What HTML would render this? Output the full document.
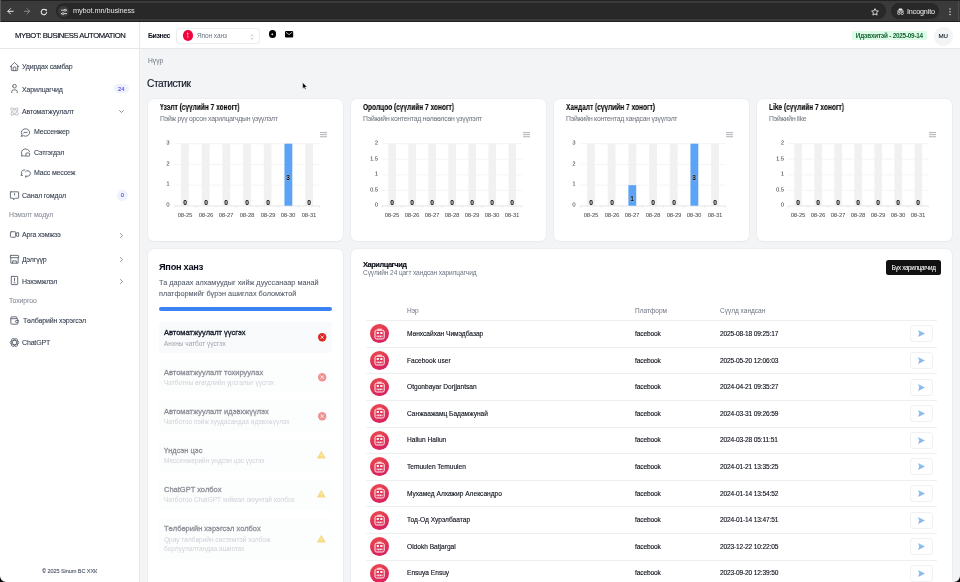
<!DOCTYPE html>
<html><head><meta charset="utf-8">
<style>
*{box-sizing:border-box;margin:0;padding:0}
html,body{width:960px;height:582px;overflow:hidden;background:#f3f4f6;font-family:"Liberation Sans",sans-serif;color:#111827}
.a{position:absolute;white-space:nowrap;line-height:1;will-change:transform}
svg{position:absolute;overflow:visible}
#chrome{position:absolute;left:0;top:0;width:960px;height:22px;background:#3a3a3a;border-top:1px solid #222;border-bottom:1px solid #1f1f1f}
#omni{position:absolute;left:56px;top:2.1px;width:830px;height:15.6px;border-radius:8px;background:#282828}
#incog{position:absolute;left:891px;top:2.1px;width:48px;height:15.6px;border-radius:8px;background:#282828}
#side{position:absolute;left:0;top:22px;width:140px;height:560px;background:#fff;border-right:1px solid #e5e7eb}
#logo{position:absolute;left:0;top:0;width:139px;height:26.5px;border-bottom:1px solid #e5e7eb}
#hdr{position:absolute;left:140px;top:22px;width:820px;height:26.5px;background:#fff;border-bottom:1px solid #e5e7eb}
.card{position:absolute;background:#fff;border-radius:6px;box-shadow:0 0 0 0.5px #e5e7eb,0 1px 2px rgba(0,0,0,.04)}
.si{font-size:7px;color:#374151;letter-spacing:-0.16px;-webkit-text-stroke:0.1px #374151}
.sic{stroke:#4b5563;fill:none;stroke-width:1.05;stroke-linecap:round;stroke-linejoin:round}
.sec{font-size:6.9px;color:#8d929b;letter-spacing:-0.1px;-webkit-text-stroke:0.1px #8d929b}
.chev{stroke:#6b7280;fill:none;stroke-width:0.8;stroke-linecap:round;stroke-linejoin:round}

.ct{font-size:8.2px;font-weight:700;color:#000;-webkit-text-stroke:0.1px #000;transform:scaleX(.8);transform-origin:0 0}
.cs{font-size:6.8px;color:#747983;letter-spacing:-0.23px;-webkit-text-stroke:0.06px #747983}
.yl{font-size:11.4px;color:#262a30;transform:scale(.5);transform-origin:0 0}
.xl{font-size:11.6px;color:#30343a;width:60px;text-align:center;letter-spacing:-0.1px;transform:scale(.5);transform-origin:0 0}
.dl{font-size:6.6px;font-weight:700;color:#000;-webkit-text-stroke:0.1px #000;width:20px;text-align:center;text-shadow:0 0 1px #fff,0 0 1px #fff}
.tt{font-size:7.5px;font-weight:400;color:#111827;-webkit-text-stroke:0.3px #111827}
.ts{font-size:6.5px;color:#9ca3af}
.th{font-size:6.5px;color:#6b7280}
.td{font-size:6.6px;color:#0b0f19;-webkit-text-stroke:0.12px #0b0f19}
</style></head><body>
<div id="chrome">
  <svg style="left:6.9px;top:6.9px" width="6.6" height="6.6" viewBox="0 0 7 7"><path d="M6.6 3.5H1M3.7.7L.9 3.5l2.8 2.8" stroke="#e8e8e8" stroke-width="1.05" fill="none" stroke-linecap="round" stroke-linejoin="round"/></svg>
  <svg style="left:23.7px;top:6.9px" width="6.6" height="6.6" viewBox="0 0 7 7"><path d="M.4 3.5H6M3.3.7l2.8 2.8-2.8 2.8" stroke="#8a8a8a" stroke-width="1.05" fill="none" stroke-linecap="round" stroke-linejoin="round"/></svg>
  <svg style="left:40px;top:6.5px" width="8" height="8" viewBox="0 0 8 8"><path d="M6.6 4.3A2.7 2.7 0 1 1 5.7 2" stroke="#e8e8e8" stroke-width="1.1" fill="none" stroke-linecap="round"/><path d="M4.6 1.2h2.3v2.3z" fill="#e8e8e8"/></svg>
  <div style="position:absolute;left:0;top:-1px;width:1px;height:22px;background:#5a5a5a"></div>
  <div id="omni">
    <div style="position:absolute;left:2.3px;top:2.8px;width:11px;height:11px;border-radius:50%;background:#3b3b3b"></div>
    <svg style="left:4.8px;top:5.5px" width="6" height="6" viewBox="0 0 6 6"><path d="M0 1.2h6M0 4.6h6" stroke="#e0e0e0" stroke-width="0.9"/><circle cx="4" cy="1.2" r="1" fill="#3b3b3b" stroke="#e0e0e0" stroke-width=".8"/><circle cx="2" cy="4.6" r="1" fill="#3b3b3b" stroke="#e0e0e0" stroke-width=".8"/></svg>
    <div class="a" style="left:17px;top:4.2px;font-size:7.4px;color:#e3e3e3;letter-spacing:-0.12px">mybot.mn/business</div>
  </div>
  <svg style="left:871px;top:6.5px" width="8" height="8" viewBox="0 0 8 8"><path d="M4 0.6l1 2.2 2.4.3-1.8 1.6.5 2.4L4 5.9 1.9 7.1l.5-2.4L.6 3.1 3 2.8z" stroke="#e8e8e8" stroke-width="0.9" fill="none" stroke-linejoin="round"/></svg>
  <div id="incog">
    <svg style="left:5.5px;top:4.5px" width="7" height="7" viewBox="0 0 7 7"><path d="M1.2 2.6L2 .4h3l.8 2.2z" fill="#e8e8e8"/><rect x="0" y="2.7" width="7" height=".8" fill="#e8e8e8"/><circle cx="1.8" cy="5.3" r="1.2" stroke="#e8e8e8" stroke-width=".8" fill="none"/><circle cx="5.2" cy="5.3" r="1.2" stroke="#e8e8e8" stroke-width=".8" fill="none"/></svg>
    <div class="a" style="left:16px;top:4.5px;font-size:7.2px;color:#e3e3e3;letter-spacing:-0.15px;-webkit-text-stroke:0.05px #e3e3e3">Incognito</div>
  </div>
  <svg style="left:948.6px;top:7.2px" width="2" height="8" viewBox="0 0 2 8"><circle cx="1" cy="1" r=".75" fill="#e0e0e0"/><circle cx="1" cy="3.85" r=".75" fill="#e0e0e0"/><circle cx="1" cy="6.6" r=".75" fill="#e0e0e0"/></svg>
  <div style="position:absolute;left:958px;top:0;width:1px;height:20px;background:#4d4d4d"></div>
</div>

<div id="side">
  <div id="logo"><div class="a" style="left:14.7px;top:10.4px;font-size:7.7px;color:#0b0f19;letter-spacing:-0.44px;-webkit-text-stroke:0.15px #0b0f19">MYBOT: BUSINESS AUTOMATION</div></div>
</div>
<div style="position:absolute;left:0;top:0">
  <!-- home -->
  <svg style="left:8.50px;top:60.70px" width="11" height="11" viewBox="0 0 24 24"><path d="M5 12H3l9-9 9 9h-2M5 12v7a2 2 0 0 0 2 2h10a2 2 0 0 0 2-2v-7M9 21v-6a2 2 0 0 1 2-2h2a2 2 0 0 1 2 2v6" fill="none" stroke="#5b6270" stroke-width="2.0" stroke-linecap="round" stroke-linejoin="round"/></svg>
  <div class="a si" style="left:22px;top:63.45px">Удирдах самбар</div>
  <!-- user -->
  <svg style="left:8.60px;top:83.30px" width="11" height="11" viewBox="0 0 24 24"><path d="M8 7a4 4 0 1 0 8 0a4 4 0 0 0-8 0M6 21v-2a4 4 0 0 1 4-4h4a4 4 0 0 1 4 4v2" fill="none" stroke="#5b6270" stroke-width="2.0" stroke-linecap="round" stroke-linejoin="round"/></svg>
  <div class="a si" style="left:22px;top:86.15px">Харилцагчид</div>
  <div class="a" style="left:113.8px;top:84.2px;width:14.6px;height:9.2px;border-radius:4.6px;background:#eef2ff;color:#4f46e5;font-size:5.8px;line-height:10px;text-align:center;-webkit-text-stroke:0.1px #4f46e5">24</div>
  <!-- automation (atom) -->
  <svg style="left:8.50px;top:105.80px" width="11" height="11" viewBox="0 0 24 24"><path d="M12 12v.01M19.07 4.93c-1.56-1.56-6 .34-9.9 4.24-3.9 3.9-5.8 8.34-4.24 9.9 1.56 1.56 6-.34 9.9-4.24 3.9-3.9 5.8-8.34 4.24-9.9M4.93 4.93c-1.56 1.56.34 6 4.24 9.9 3.9 3.9 8.34 5.8 9.9 4.24 1.56-1.56-.34-6-4.24-9.9-3.9-3.9-8.34-5.8-9.9-4.24" fill="none" stroke="#c6cad1" stroke-width="2.4" stroke-linecap="round" stroke-linejoin="round"/></svg>
  <div class="a si" style="left:22px;top:108.35px">Автоматжуулалт</div>
  <svg style="left:119px;top:109.5px" width="5" height="3" viewBox="0 0 5 3"><path class="chev" d="M.5.5L2.5 2.5 4.5.5"/></svg>
  <!-- messenger -->
  <svg style="left:19.60px;top:126.70px" width="11" height="11" viewBox="0 0 24 24"><path d="M3 20l1.3-3.9A9 8 0 1 1 7.7 19L3 20M8 13l3-2 2 2 3-2" fill="none" stroke="#5b6270" stroke-width="2.0" stroke-linecap="round" stroke-linejoin="round"/></svg>
  <div class="a si" style="left:33.7px;top:128.25px">Мессенжер</div>
  <!-- comment -->
  <svg style="left:19.60px;top:147.10px" width="11" height="11" viewBox="0 0 24 24"><path d="M12.5 19.6A9 8 0 0 1 7.7 19L3 20l1.3-3.9A9 8 0 1 1 20.8 10" fill="none" stroke="#5b6270" stroke-width="2.0" stroke-linecap="round" stroke-linejoin="round"/><rect x="13" y="13" width="8" height="7" rx="2" fill="none" stroke="#5b6270" stroke-width="2.0"/></svg>
  <div class="a si" style="left:33.7px;top:149.35px">Сэтгэгдэл</div>
  <!-- mass message -->
  <svg style="left:19.60px;top:167.50px" width="11" height="11" viewBox="0 0 24 24"><path d="M12 8a6 6 0 1 1 4.6 9.8L12 20l.8-3.3M10.6 4.2A6.4 6 0 0 0 3 10l1 3-2 3h3.4" fill="none" stroke="#5b6270" stroke-width="2.0" stroke-linecap="round" stroke-linejoin="round"/></svg>
  <div class="a si" style="left:33.7px;top:169.05px">Масс мессеж</div>
  <!-- feedback -->
  <svg style="left:8.60px;top:189.50px" width="11" height="11" viewBox="0 0 24 24"><path d="M4 4h16a1 1 0 0 1 1 1v12a1 1 0 0 1-1 1h-6l-4 3v-3H4a1 1 0 0 1-1-1V5a1 1 0 0 1 1-1zM12 8v3" fill="none" stroke="#5b6270" stroke-width="2.0" stroke-linecap="round" stroke-linejoin="round"/></svg>
  <div class="a si" style="left:22px;top:191.95px">Санал гомдол</div>
  <div class="a" style="left:117.3px;top:189.5px;width:10.8px;height:10.8px;border-radius:50%;background:#eef2ff;color:#4f46e5;font-size:5.8px;line-height:11.6px;text-align:center;-webkit-text-stroke:0.1px #4f46e5">0</div>
  <div class="a sec" style="left:9.4px;top:211.85px">Нэмэлт модул</div>
  <!-- event video -->
  <svg style="left:8.60px;top:229.10px" width="11" height="11" viewBox="0 0 24 24"><path d="M15 10l4.55-2.28A1 1 0 0 1 21 8.62v6.76a1 1 0 0 1-1.45.9L15 14v-4zM5 6h8a2 2 0 0 1 2 2v8a2 2 0 0 1-2 2H5a2 2 0 0 1-2-2V8a2 2 0 0 1 2-2z" fill="none" stroke="#5b6270" stroke-width="2.0" stroke-linecap="round" stroke-linejoin="round"/></svg>
  <div class="a si" style="left:22.3px;top:231.05px">Арга хэмжээ</div>
  <svg style="left:120.3px;top:232.6px" width="3" height="5" viewBox="0 0 3 5"><path class="chev" d="M.5.5l2 2-2 2"/></svg>
  <!-- store -->
  <svg style="left:8.60px;top:253.50px" width="11" height="11" viewBox="0 0 24 24"><path d="M4 3h16a1 1 0 0 1 1 1v4H3V4a1 1 0 0 1 1-1zM4 8v12h16V8M8 20v-5h8v5" fill="none" stroke="#5b6270" stroke-width="2.0" stroke-linecap="round" stroke-linejoin="round"/></svg>
  <div class="a si" style="left:22.3px;top:255.85px">Дэлгүүр</div>
  <svg style="left:120.3px;top:256.8px" width="3" height="5" viewBox="0 0 3 5"><path class="chev" d="M.5.5l2 2-2 2"/></svg>
  <!-- invoice -->
  <svg style="left:8.90px;top:275.20px" width="11" height="11" viewBox="0 0 24 24"><path d="M6 3h12a1 1 0 0 1 1 1v16a1 1 0 0 1-1 1H6a1 1 0 0 1-1-1V4a1 1 0 0 1 1-1zM12 7v6M11 17h2" fill="none" stroke="#5b6270" stroke-width="2.0" stroke-linecap="round" stroke-linejoin="round"/></svg>
  <div class="a si" style="left:22.3px;top:277.65px">Нэхэмжлэл</div>
  <svg style="left:120.3px;top:278.6px" width="3" height="5" viewBox="0 0 3 5"><path class="chev" d="M.5.5l2 2-2 2"/></svg>
  <div class="a sec" style="left:9.4px;top:298.35px">Тохиргоо</div>
  <!-- wallet -->
  <svg style="left:8.80px;top:315.00px" width="11" height="11" viewBox="0 0 24 24"><path d="M17 8V5a1 1 0 0 0-1-1H6a2 2 0 0 0-2 2v12a2 2 0 0 0 2 2h12a1 1 0 0 0 1-1v-3M20 12v4h-4a2 2 0 0 1 0-4h4M19 12V9a1 1 0 0 0-1-1H4" fill="none" stroke="#5b6270" stroke-width="2.0" stroke-linecap="round" stroke-linejoin="round"/></svg>
  <div class="a si" style="left:22.5px;top:317.45px">Төлбөрийн хэрэгсэл</div>
  <!-- chatgpt -->
  <svg style="left:8.60px;top:336.90px" width="11" height="11" viewBox="0 0 24 24"><g fill="none" stroke="#5b6270" stroke-width="1.9"><ellipse cx="12" cy="12" rx="9.5" ry="4.6"/><ellipse cx="12" cy="12" rx="9.5" ry="4.6" transform="rotate(60 12 12)"/><ellipse cx="12" cy="12" rx="9.5" ry="4.6" transform="rotate(120 12 12)"/></g></svg>
  <div class="a si" style="left:22.3px;top:339.35px">ChatGPT</div>
  <div class="a" style="left:42.4px;top:569.4px;font-size:5.6px;color:#4b5563;letter-spacing:-0.1px;-webkit-text-stroke:0.1px #4b5563">© 2025 Sinum BC ХХК</div>
</div>

<div id="hdr">
  <div class="a" style="left:7.5px;top:10.1px;font-size:7px;font-weight:700;color:#0b0f19;letter-spacing:-0.45px">Бизнес</div>
  <div style="position:absolute;left:36.3px;top:5.6px;width:83.8px;height:16px;border:1px solid #eceef1;border-radius:3px;background:#fff">
    <div style="position:absolute;left:5.3px;top:1.5px;width:10.6px;height:10.8px;border-radius:50%;background:#f2063c"></div>
    <svg style="left:9px;top:3.6px" width="3" height="6" viewBox="0 0 3 6"><path d="M1 .4l1.4.5-.3 1.9H1z" fill="#f7b9c6"/><path d="M1.2 3.4h1.1v2.4H1.2z" fill="#f4a9b9"/></svg>
    <div class="a" style="left:19.8px;top:4.8px;font-size:6.5px;color:#6b7280;letter-spacing:-0.07px">Япон ханз</div>
    <svg style="left:72.5px;top:5px" width="4" height="6" viewBox="0 0 4 6"><path d="M.6 2L2 .8 3.4 2M.6 4L2 5.2 3.4 4" stroke="#a3a8b0" stroke-width=".7" fill="none"/></svg>
  </div>
  <div style="position:absolute;left:128.6px;top:8px;width:7.7px;height:7.7px;border-radius:50%;background:#000"></div>
  <svg style="left:131.2px;top:10.6px" width="2.6" height="2.6" viewBox="0 0 2.6 2.6"><path d="M1.3 .3v2M.3 1.3h2" stroke="#fff" stroke-width=".7"/></svg>
  <svg style="left:145px;top:8.6px" width="8.2" height="6.4" viewBox="0 0 8.2 6.4"><rect x="0" y="0" width="8.2" height="6.4" rx=".9" fill="#000"/><path d="M.9 1.2L4.1 3.6 7.3 1.2" stroke="#fff" stroke-width=".7" fill="none"/></svg>
  <div class="a" style="left:712px;top:8.8px;width:74.8px;height:9.2px;border-radius:2px;background:#dcfce7;color:#166534;font-size:6.3px;font-weight:700;line-height:9.2px;text-align:center;letter-spacing:-0.2px">Идэвхитэй - 2025-09-14</div>
  <div class="a" style="left:794px;top:4.5px;width:18.5px;height:18.5px;border-radius:50%;background:#f3f4f6;color:#111827;font-size:6.2px;line-height:18.5px;text-align:center;-webkit-text-stroke:0.12px #111827">MU</div>
</div>

<div class="a" style="left:147.6px;top:58.3px;font-size:6.7px;color:#6b7280">Нүүр</div>
<div class="a" style="left:147.4px;top:78.9px;font-size:10.2px;color:#111827;letter-spacing:-0.45px;-webkit-text-stroke:0.15px #111827">Статистик</div>


<div class="card" style="left:148px;top:98.5px;width:195px;height:142.5px">
<div class="a ct" style="left:11.5px;top:5.1px">Үзэлт (сүүлийн 7 хоногт)</div>
<div class="a cs" style="left:11.6px;top:17.8px">Пэйж рүү орсон харилцагчдын үзүүлэлт</div>
<svg style="left:172px;top:33.6px" width="7" height="6" viewBox="0 0 7 6"><path d="M0 .6h7M0 2.65h7M0 4.75h7" stroke="#9ea3ab" stroke-width=".85"/></svg>
<svg style="left:0;top:0" width="195" height="142" viewBox="0 0 195 142"><path d="M26.6 44.7h144.8" stroke="#ececec" stroke-width=".6"/><path d="M26.6 65.43h144.8" stroke="#ececec" stroke-width=".6"/><path d="M26.6 86.17h144.8" stroke="#ececec" stroke-width=".6"/><path d="M26.6 106.9h144.8" stroke="#ececec" stroke-width=".6"/><rect x="33.04" y="44.7" width="7.8" height="62.2" fill="#f1f1f1"/><rect x="53.73" y="44.7" width="7.8" height="62.2" fill="#f1f1f1"/><rect x="74.41" y="44.7" width="7.8" height="62.2" fill="#f1f1f1"/><rect x="95.1" y="44.7" width="7.8" height="62.2" fill="#f1f1f1"/><rect x="115.79" y="44.7" width="7.8" height="62.2" fill="#f1f1f1"/><rect x="136.47" y="44.7" width="7.8" height="62.2" fill="#f1f1f1"/><rect x="136.47" y="44.7" width="7.8" height="62.2" fill="#5aa3f6"/><rect x="157.16" y="44.7" width="7.8" height="62.2" fill="#f1f1f1"/><path d="M26.6 107.1h144.8" stroke="#e3e3e3" stroke-width=".6"/><path d="M26.6 106.9v2.2" stroke="#e3e3e3" stroke-width=".6"/><path d="M47.29 106.9v2.2" stroke="#e3e3e3" stroke-width=".6"/><path d="M67.97 106.9v2.2" stroke="#e3e3e3" stroke-width=".6"/><path d="M88.66 106.9v2.2" stroke="#e3e3e3" stroke-width=".6"/><path d="M109.34 106.9v2.2" stroke="#e3e3e3" stroke-width=".6"/><path d="M130.03 106.9v2.2" stroke="#e3e3e3" stroke-width=".6"/><path d="M150.71 106.9v2.2" stroke="#e3e3e3" stroke-width=".6"/><path d="M171.4 106.9v2.2" stroke="#e3e3e3" stroke-width=".6"/></svg>
<div class="a yl" style="left:0.4px;width:80px;text-align:center;top:41.5px">3</div>
<div class="a yl" style="left:0.4px;width:80px;text-align:center;top:62.23px">2</div>
<div class="a yl" style="left:0.4px;width:80px;text-align:center;top:82.97px">1</div>
<div class="a yl" style="left:0.4px;width:80px;text-align:center;top:103.7px">0</div>
<div class="a dl" style="left:26.94px;top:101.8px">0</div>
<div class="a xl" style="left:21.94px;top:113.8px">08-25</div>
<div class="a dl" style="left:47.63px;top:101.8px">0</div>
<div class="a xl" style="left:42.63px;top:113.8px">08-26</div>
<div class="a dl" style="left:68.31px;top:101.8px">0</div>
<div class="a xl" style="left:63.31px;top:113.8px">08-27</div>
<div class="a dl" style="left:89px;top:101.8px">0</div>
<div class="a xl" style="left:84px;top:113.8px">08-28</div>
<div class="a dl" style="left:109.69px;top:101.8px">0</div>
<div class="a xl" style="left:104.69px;top:113.8px">08-29</div>
<div class="a dl" style="left:130.37px;top:76.9px">3</div>
<div class="a xl" style="left:125.37px;top:113.8px">08-30</div>
<div class="a dl" style="left:151.06px;top:101.8px">0</div>
<div class="a xl" style="left:146.06px;top:113.8px">08-31</div>
</div>
<div class="card" style="left:351px;top:98.5px;width:195px;height:142.5px">
<div class="a ct" style="left:11.5px;top:5.1px">Оролцоо (сүүлийн 7 хоногт)</div>
<div class="a cs" style="left:11.6px;top:17.8px">Пэйжийн контентад нөлөөлсөн үзүүлэлт</div>
<svg style="left:172px;top:33.6px" width="7" height="6" viewBox="0 0 7 6"><path d="M0 .6h7M0 2.65h7M0 4.75h7" stroke="#9ea3ab" stroke-width=".85"/></svg>
<svg style="left:0;top:0" width="195" height="142" viewBox="0 0 195 142"><path d="M31.1 44.7h140.2" stroke="#ececec" stroke-width=".6"/><path d="M31.1 60.25h140.2" stroke="#ececec" stroke-width=".6"/><path d="M31.1 75.8h140.2" stroke="#ececec" stroke-width=".6"/><path d="M31.1 91.35h140.2" stroke="#ececec" stroke-width=".6"/><path d="M31.1 106.9h140.2" stroke="#ececec" stroke-width=".6"/><rect x="37.31" y="44.7" width="7.6" height="62.2" fill="#f1f1f1"/><rect x="57.34" y="44.7" width="7.6" height="62.2" fill="#f1f1f1"/><rect x="77.37" y="44.7" width="7.6" height="62.2" fill="#f1f1f1"/><rect x="97.4" y="44.7" width="7.6" height="62.2" fill="#f1f1f1"/><rect x="117.43" y="44.7" width="7.6" height="62.2" fill="#f1f1f1"/><rect x="137.46" y="44.7" width="7.6" height="62.2" fill="#f1f1f1"/><rect x="157.49" y="44.7" width="7.6" height="62.2" fill="#f1f1f1"/><path d="M31.1 107.1h140.2" stroke="#e3e3e3" stroke-width=".6"/><path d="M31.1 106.9v2.2" stroke="#e3e3e3" stroke-width=".6"/><path d="M51.13 106.9v2.2" stroke="#e3e3e3" stroke-width=".6"/><path d="M71.16 106.9v2.2" stroke="#e3e3e3" stroke-width=".6"/><path d="M91.19 106.9v2.2" stroke="#e3e3e3" stroke-width=".6"/><path d="M111.21 106.9v2.2" stroke="#e3e3e3" stroke-width=".6"/><path d="M131.24 106.9v2.2" stroke="#e3e3e3" stroke-width=".6"/><path d="M151.27 106.9v2.2" stroke="#e3e3e3" stroke-width=".6"/><path d="M171.3 106.9v2.2" stroke="#e3e3e3" stroke-width=".6"/></svg>
<div class="a yl" style="left:-13.3px;width:80px;text-align:right;top:41.5px">2</div>
<div class="a yl" style="left:-13.3px;width:80px;text-align:right;top:57.05px">1.5</div>
<div class="a yl" style="left:-13.3px;width:80px;text-align:right;top:72.6px">1</div>
<div class="a yl" style="left:-13.3px;width:80px;text-align:right;top:88.15px">0.5</div>
<div class="a yl" style="left:-13.3px;width:80px;text-align:right;top:103.7px">0</div>
<div class="a dl" style="left:31.11px;top:101.8px">0</div>
<div class="a xl" style="left:26.11px;top:113.8px">08-25</div>
<div class="a dl" style="left:51.14px;top:101.8px">0</div>
<div class="a xl" style="left:46.14px;top:113.8px">08-26</div>
<div class="a dl" style="left:71.17px;top:101.8px">0</div>
<div class="a xl" style="left:66.17px;top:113.8px">08-27</div>
<div class="a dl" style="left:91.2px;top:101.8px">0</div>
<div class="a xl" style="left:86.2px;top:113.8px">08-28</div>
<div class="a dl" style="left:111.23px;top:101.8px">0</div>
<div class="a xl" style="left:106.23px;top:113.8px">08-29</div>
<div class="a dl" style="left:131.26px;top:101.8px">0</div>
<div class="a xl" style="left:126.26px;top:113.8px">08-30</div>
<div class="a dl" style="left:151.29px;top:101.8px">0</div>
<div class="a xl" style="left:146.29px;top:113.8px">08-31</div>
</div>
<div class="card" style="left:554px;top:98.5px;width:195px;height:142.5px">
<div class="a ct" style="left:11.5px;top:5.1px">Хандалт (сүүлийн 7 хоногт)</div>
<div class="a cs" style="left:11.6px;top:17.8px">Пэйжийн контентад хандсан үзүүлэлт</div>
<svg style="left:172px;top:33.6px" width="7" height="6" viewBox="0 0 7 6"><path d="M0 .6h7M0 2.65h7M0 4.75h7" stroke="#9ea3ab" stroke-width=".85"/></svg>
<svg style="left:0;top:0" width="195" height="142" viewBox="0 0 195 142"><path d="M26.6 44.7h144.8" stroke="#ececec" stroke-width=".6"/><path d="M26.6 65.43h144.8" stroke="#ececec" stroke-width=".6"/><path d="M26.6 86.17h144.8" stroke="#ececec" stroke-width=".6"/><path d="M26.6 106.9h144.8" stroke="#ececec" stroke-width=".6"/><rect x="33.04" y="44.7" width="7.8" height="62.2" fill="#f1f1f1"/><rect x="53.73" y="44.7" width="7.8" height="62.2" fill="#f1f1f1"/><rect x="74.41" y="44.7" width="7.8" height="62.2" fill="#f1f1f1"/><rect x="74.41" y="86.17" width="7.8" height="20.73" fill="#5aa3f6"/><rect x="95.1" y="44.7" width="7.8" height="62.2" fill="#f1f1f1"/><rect x="115.79" y="44.7" width="7.8" height="62.2" fill="#f1f1f1"/><rect x="136.47" y="44.7" width="7.8" height="62.2" fill="#f1f1f1"/><rect x="136.47" y="44.7" width="7.8" height="62.2" fill="#5aa3f6"/><rect x="157.16" y="44.7" width="7.8" height="62.2" fill="#f1f1f1"/><path d="M26.6 107.1h144.8" stroke="#e3e3e3" stroke-width=".6"/><path d="M26.6 106.9v2.2" stroke="#e3e3e3" stroke-width=".6"/><path d="M47.29 106.9v2.2" stroke="#e3e3e3" stroke-width=".6"/><path d="M67.97 106.9v2.2" stroke="#e3e3e3" stroke-width=".6"/><path d="M88.66 106.9v2.2" stroke="#e3e3e3" stroke-width=".6"/><path d="M109.34 106.9v2.2" stroke="#e3e3e3" stroke-width=".6"/><path d="M130.03 106.9v2.2" stroke="#e3e3e3" stroke-width=".6"/><path d="M150.71 106.9v2.2" stroke="#e3e3e3" stroke-width=".6"/><path d="M171.4 106.9v2.2" stroke="#e3e3e3" stroke-width=".6"/></svg>
<div class="a yl" style="left:0.4px;width:80px;text-align:center;top:41.5px">3</div>
<div class="a yl" style="left:0.4px;width:80px;text-align:center;top:62.23px">2</div>
<div class="a yl" style="left:0.4px;width:80px;text-align:center;top:82.97px">1</div>
<div class="a yl" style="left:0.4px;width:80px;text-align:center;top:103.7px">0</div>
<div class="a dl" style="left:26.94px;top:101.8px">0</div>
<div class="a xl" style="left:21.94px;top:113.8px">08-25</div>
<div class="a dl" style="left:47.63px;top:101.8px">0</div>
<div class="a xl" style="left:42.63px;top:113.8px">08-26</div>
<div class="a dl" style="left:68.31px;top:97.63px">1</div>
<div class="a xl" style="left:63.31px;top:113.8px">08-27</div>
<div class="a dl" style="left:89px;top:101.8px">0</div>
<div class="a xl" style="left:84px;top:113.8px">08-28</div>
<div class="a dl" style="left:109.69px;top:101.8px">0</div>
<div class="a xl" style="left:104.69px;top:113.8px">08-29</div>
<div class="a dl" style="left:130.37px;top:76.9px">3</div>
<div class="a xl" style="left:125.37px;top:113.8px">08-30</div>
<div class="a dl" style="left:151.06px;top:101.8px">0</div>
<div class="a xl" style="left:146.06px;top:113.8px">08-31</div>
</div>
<div class="card" style="left:757px;top:98.5px;width:195px;height:142.5px">
<div class="a ct" style="left:11.5px;top:5.1px">Like (сүүлийн 7 хоногт)</div>
<div class="a cs" style="left:11.6px;top:17.8px">Пэйжийн like</div>
<svg style="left:172px;top:33.6px" width="7" height="6" viewBox="0 0 7 6"><path d="M0 .6h7M0 2.65h7M0 4.75h7" stroke="#9ea3ab" stroke-width=".85"/></svg>
<svg style="left:0;top:0" width="195" height="142" viewBox="0 0 195 142"><path d="M31.1 44.7h140.2" stroke="#ececec" stroke-width=".6"/><path d="M31.1 60.25h140.2" stroke="#ececec" stroke-width=".6"/><path d="M31.1 75.8h140.2" stroke="#ececec" stroke-width=".6"/><path d="M31.1 91.35h140.2" stroke="#ececec" stroke-width=".6"/><path d="M31.1 106.9h140.2" stroke="#ececec" stroke-width=".6"/><rect x="37.31" y="44.7" width="7.6" height="62.2" fill="#f1f1f1"/><rect x="57.34" y="44.7" width="7.6" height="62.2" fill="#f1f1f1"/><rect x="77.37" y="44.7" width="7.6" height="62.2" fill="#f1f1f1"/><rect x="97.4" y="44.7" width="7.6" height="62.2" fill="#f1f1f1"/><rect x="117.43" y="44.7" width="7.6" height="62.2" fill="#f1f1f1"/><rect x="137.46" y="44.7" width="7.6" height="62.2" fill="#f1f1f1"/><rect x="157.49" y="44.7" width="7.6" height="62.2" fill="#f1f1f1"/><path d="M31.1 107.1h140.2" stroke="#e3e3e3" stroke-width=".6"/><path d="M31.1 106.9v2.2" stroke="#e3e3e3" stroke-width=".6"/><path d="M51.13 106.9v2.2" stroke="#e3e3e3" stroke-width=".6"/><path d="M71.16 106.9v2.2" stroke="#e3e3e3" stroke-width=".6"/><path d="M91.19 106.9v2.2" stroke="#e3e3e3" stroke-width=".6"/><path d="M111.21 106.9v2.2" stroke="#e3e3e3" stroke-width=".6"/><path d="M131.24 106.9v2.2" stroke="#e3e3e3" stroke-width=".6"/><path d="M151.27 106.9v2.2" stroke="#e3e3e3" stroke-width=".6"/><path d="M171.3 106.9v2.2" stroke="#e3e3e3" stroke-width=".6"/></svg>
<div class="a yl" style="left:-13.3px;width:80px;text-align:right;top:41.5px">2</div>
<div class="a yl" style="left:-13.3px;width:80px;text-align:right;top:57.05px">1.5</div>
<div class="a yl" style="left:-13.3px;width:80px;text-align:right;top:72.6px">1</div>
<div class="a yl" style="left:-13.3px;width:80px;text-align:right;top:88.15px">0.5</div>
<div class="a yl" style="left:-13.3px;width:80px;text-align:right;top:103.7px">0</div>
<div class="a dl" style="left:31.11px;top:101.8px">0</div>
<div class="a xl" style="left:26.11px;top:113.8px">08-25</div>
<div class="a dl" style="left:51.14px;top:101.8px">0</div>
<div class="a xl" style="left:46.14px;top:113.8px">08-26</div>
<div class="a dl" style="left:71.17px;top:101.8px">0</div>
<div class="a xl" style="left:66.17px;top:113.8px">08-27</div>
<div class="a dl" style="left:91.2px;top:101.8px">0</div>
<div class="a xl" style="left:86.2px;top:113.8px">08-28</div>
<div class="a dl" style="left:111.23px;top:101.8px">0</div>
<div class="a xl" style="left:106.23px;top:113.8px">08-29</div>
<div class="a dl" style="left:131.26px;top:101.8px">0</div>
<div class="a xl" style="left:126.26px;top:113.8px">08-30</div>
<div class="a dl" style="left:151.29px;top:101.8px">0</div>
<div class="a xl" style="left:146.29px;top:113.8px">08-31</div>
</div>
<div class="card" style="left:148px;top:248.7px;width:195px;height:400px">
<div class="a" style="left:10.8px;top:14.1px;font-size:9.2px;font-weight:700;letter-spacing:-0.25px;color:#0b0f19;-webkit-text-stroke:0.05px #0b0f19">Япон ханз</div>
<div class="a" style="left:10.9px;top:29.5px;font-size:7.3px;line-height:10.6px;color:#555c69;-webkit-text-stroke:0.08px #555c69;white-space:normal;width:180px">Та дараах алхамуудыг хийж дууссанаар манай<br>платформийг бүрэн ашиглах боломжтой</div>
<div style="position:absolute;left:10.8px;top:58.3px;width:173.5px;height:3.8px;border-radius:2px;background:#3b82f6"></div>
<div style="position:absolute;left:11px;top:73.5px;width:172.8px;height:31px;border-radius:3.5px;background:#f9fafb;opacity:1.0">
<div class="a tt" style="left:5.4px;top:7.1px">Автоматжуулалт үүсгэх</div>
<div class="a ts" style="left:5.4px;top:16.4px;line-height:9.4px">Анхны чатбот үүсгэх</div>
<svg style="left:158.5px;top:11.3px" width="8.4" height="8.4" viewBox="0 0 8.4 8.4"><circle cx="4.2" cy="4.2" r="4.2" fill="#dc2626"/><path d="M2.9 2.9l2.6 2.6M5.5 2.9L2.9 5.5" stroke="#fff" stroke-width=".8" stroke-linecap="round"/></svg>
</div>
<div style="position:absolute;left:11px;top:112.8px;width:172.8px;height:31px;border-radius:3.5px;background:#f9fafb;opacity:0.5">
<div class="a tt" style="left:5.4px;top:7.1px">Автоматжуулалт тохируулах</div>
<div class="a ts" style="left:5.4px;top:16.4px;line-height:9.4px">Чатботны өгөгдлийн урсгалыг үүсгэх</div>
<svg style="left:158.5px;top:11.3px" width="8.4" height="8.4" viewBox="0 0 8.4 8.4"><circle cx="4.2" cy="4.2" r="4.2" fill="#dc2626"/><path d="M2.9 2.9l2.6 2.6M5.5 2.9L2.9 5.5" stroke="#fff" stroke-width=".8" stroke-linecap="round"/></svg>
</div>
<div style="position:absolute;left:11px;top:151.8px;width:172.8px;height:31px;border-radius:3.5px;background:#f9fafb;opacity:0.5">
<div class="a tt" style="left:5.4px;top:7.1px">Автоматжуулалт идэвхжүүлэх</div>
<div class="a ts" style="left:5.4px;top:16.4px;line-height:9.4px">Чатботоо пэйж хуудасандаа идэвхжүүлэх</div>
<svg style="left:158.5px;top:11.3px" width="8.4" height="8.4" viewBox="0 0 8.4 8.4"><circle cx="4.2" cy="4.2" r="4.2" fill="#dc2626"/><path d="M2.9 2.9l2.6 2.6M5.5 2.9L2.9 5.5" stroke="#fff" stroke-width=".8" stroke-linecap="round"/></svg>
</div>
<div style="position:absolute;left:11px;top:191.1px;width:172.8px;height:31px;border-radius:3.5px;background:#f9fafb;opacity:0.5">
<div class="a tt" style="left:5.4px;top:7.1px">Үндсэн цэс</div>
<div class="a ts" style="left:5.4px;top:16.4px;line-height:9.4px">Мессенжерийн үндсэн цэс үүсгэх</div>
<svg style="left:158.2px;top:11.3px" width="8.6" height="7.6" viewBox="0 0 8.6 7.6"><path d="M4.3.3L8.4 7.3H.2z" fill="#eab308" stroke="#eab308" stroke-width=".5" stroke-linejoin="round"/><path d="M4.3 2.8v2" stroke="#fff" stroke-width=".8"/><circle cx="4.3" cy="6" r=".45" fill="#fff"/></svg>
</div>
<div style="position:absolute;left:11px;top:230.4px;width:172.8px;height:31px;border-radius:3.5px;background:#f9fafb;opacity:0.5">
<div class="a tt" style="left:5.4px;top:7.1px">ChatGPT холбох</div>
<div class="a ts" style="left:5.4px;top:16.4px;line-height:9.4px">Чатботоо ChatGPT хиймэл оюунтай холбох</div>
<svg style="left:158.2px;top:11.3px" width="8.6" height="7.6" viewBox="0 0 8.6 7.6"><path d="M4.3.3L8.4 7.3H.2z" fill="#eab308" stroke="#eab308" stroke-width=".5" stroke-linejoin="round"/><path d="M4.3 2.8v2" stroke="#fff" stroke-width=".8"/><circle cx="4.3" cy="6" r=".45" fill="#fff"/></svg>
</div>
<div style="position:absolute;left:11px;top:269.7px;width:172.8px;height:40.8px;border-radius:3.5px;background:#f9fafb;opacity:0.5">
<div class="a tt" style="left:5.4px;top:7.1px">Төлбөрийн хэрэгсэл холбох</div>
<div class="a ts" style="left:5.4px;top:16.4px;line-height:9.4px">Qpay төлбөрийн системтэй холбож<br>борлуулалтандаа ашиглах</div>
<svg style="left:158.2px;top:16.2px" width="8.6" height="7.6" viewBox="0 0 8.6 7.6"><path d="M4.3.3L8.4 7.3H.2z" fill="#eab308" stroke="#eab308" stroke-width=".5" stroke-linejoin="round"/><path d="M4.3 2.8v2" stroke="#fff" stroke-width=".8"/><circle cx="4.3" cy="6" r=".45" fill="#fff"/></svg>
</div>
</div>
<div class="card" style="left:351px;top:248.7px;width:601px;height:400px">
<div class="a" style="left:11.5px;top:11.9px;font-size:7.4px;font-weight:700;letter-spacing:-0.42px;color:#0b0f19;-webkit-text-stroke:0.15px #0b0f19">Харилцагчид</div>
<div class="a" style="left:11.5px;top:21.1px;font-size:6.6px;letter-spacing:-0.12px;color:#6b7280">Сүүлийн 24 цагт хандсан харилцагчид</div>
<div class="a" style="left:535px;top:11.8px;width:55px;height:14.8px;border-radius:2.5px;background:#111;color:#fff;font-size:6.3px;line-height:15.6px;text-align:center;letter-spacing:-0.35px;-webkit-text-stroke:0.05px #fff;overflow:hidden">Бүх харилцагчид</div>
<div class="a th" style="left:56.1px;top:59.5px">Нэр</div>
<div class="a th" style="left:283.7px;top:59.5px">Платформ</div>
<div class="a th" style="left:369.3px;top:59.5px">Сүүлд хандсан</div>
<div style="position:absolute;left:14.8px;top:71.4px;width:571.2px;height:1px;background:#eeeff1"></div>
<div style="position:absolute;left:18.8px;top:75.7px;width:18.8px;height:18.8px;border-radius:50%;background:linear-gradient(160deg,#ea4b4b,#d81b60)"></div>
<svg style="left:22.6px;top:78.9px" width="11.2" height="12" viewBox="0 0 11.2 12"><g fill="none" stroke="#fff" stroke-width=".95"><rect x="1" y="2.2" width="9.2" height="8.8" rx="1.6"/><path d="M3.4 1.2h4.4"/></g><g fill="#fff"><rect x="2.7" y="4" width="2.2" height="1.9" rx=".3"/><rect x="6.3" y="4" width="2.2" height="1.9" rx=".3"/><path d="M2.6 7.6h6v1.6h-6z" opacity=".9"/></g><path d="M3.6 7.6v1.6M5.6 7.6v1.6M7.6 7.6v1.6" stroke="#e03658" stroke-width=".45"/></svg>
<div class="a td tn" style="left:56.1px;top:82.2px">Мөнхсайхан Чимэдбазар</div>
<div class="a td" style="left:283.7px;top:82.2px;letter-spacing:-0.12px">facebook</div>
<div class="a td" style="left:369.3px;top:82.2px;letter-spacing:-0.16px">2025-08-18 09:25:17</div>
<div style="position:absolute;left:559.2px;top:76.6px;width:23.1px;height:17px;border:0.8px solid #f0f1f3;border-radius:3px;background:#fff"></div>
<svg style="left:567.2px;top:81.7px" width="7" height="7" viewBox="0 0 7 7"><defs><linearGradient id="g0" x1="0" y1="0" x2="0" y2="1"><stop offset="0" stop-color="#6cc0f4"/><stop offset="1" stop-color="#7c9ce8"/></linearGradient></defs><path d="M0 0L7 3.5 0 7 1.3 3.5z" fill="url(#g0)" opacity=".85"/></svg>
<div style="position:absolute;left:14.8px;top:98.02px;width:571.2px;height:1px;background:#eeeff1"></div>
<div style="position:absolute;left:18.8px;top:102.32px;width:18.8px;height:18.8px;border-radius:50%;background:linear-gradient(160deg,#ea4b4b,#d81b60)"></div>
<svg style="left:22.6px;top:105.52px" width="11.2" height="12" viewBox="0 0 11.2 12"><g fill="none" stroke="#fff" stroke-width=".95"><rect x="1" y="2.2" width="9.2" height="8.8" rx="1.6"/><path d="M3.4 1.2h4.4"/></g><g fill="#fff"><rect x="2.7" y="4" width="2.2" height="1.9" rx=".3"/><rect x="6.3" y="4" width="2.2" height="1.9" rx=".3"/><path d="M2.6 7.6h6v1.6h-6z" opacity=".9"/></g><path d="M3.6 7.6v1.6M5.6 7.6v1.6M7.6 7.6v1.6" stroke="#e03658" stroke-width=".45"/></svg>
<div class="a td tn" style="left:56.1px;top:108.82px">Facebook user</div>
<div class="a td" style="left:283.7px;top:108.82px;letter-spacing:-0.12px">facebook</div>
<div class="a td" style="left:369.3px;top:108.82px;letter-spacing:-0.16px">2025-05-20 12:06:03</div>
<div style="position:absolute;left:559.2px;top:103.22px;width:23.1px;height:17px;border:0.8px solid #f0f1f3;border-radius:3px;background:#fff"></div>
<svg style="left:567.2px;top:108.32px" width="7" height="7" viewBox="0 0 7 7"><defs><linearGradient id="g1" x1="0" y1="0" x2="0" y2="1"><stop offset="0" stop-color="#6cc0f4"/><stop offset="1" stop-color="#7c9ce8"/></linearGradient></defs><path d="M0 0L7 3.5 0 7 1.3 3.5z" fill="url(#g1)" opacity=".85"/></svg>
<div style="position:absolute;left:14.8px;top:124.64px;width:571.2px;height:1px;background:#eeeff1"></div>
<div style="position:absolute;left:18.8px;top:128.94px;width:18.8px;height:18.8px;border-radius:50%;background:linear-gradient(160deg,#ea4b4b,#d81b60)"></div>
<svg style="left:22.6px;top:132.14px" width="11.2" height="12" viewBox="0 0 11.2 12"><g fill="none" stroke="#fff" stroke-width=".95"><rect x="1" y="2.2" width="9.2" height="8.8" rx="1.6"/><path d="M3.4 1.2h4.4"/></g><g fill="#fff"><rect x="2.7" y="4" width="2.2" height="1.9" rx=".3"/><rect x="6.3" y="4" width="2.2" height="1.9" rx=".3"/><path d="M2.6 7.6h6v1.6h-6z" opacity=".9"/></g><path d="M3.6 7.6v1.6M5.6 7.6v1.6M7.6 7.6v1.6" stroke="#e03658" stroke-width=".45"/></svg>
<div class="a td tn" style="left:56.1px;top:135.44px">Otgonbayar Dorjjantsan</div>
<div class="a td" style="left:283.7px;top:135.44px;letter-spacing:-0.12px">facebook</div>
<div class="a td" style="left:369.3px;top:135.44px;letter-spacing:-0.16px">2024-04-21 09:35:27</div>
<div style="position:absolute;left:559.2px;top:129.84px;width:23.1px;height:17px;border:0.8px solid #f0f1f3;border-radius:3px;background:#fff"></div>
<svg style="left:567.2px;top:134.94px" width="7" height="7" viewBox="0 0 7 7"><defs><linearGradient id="g2" x1="0" y1="0" x2="0" y2="1"><stop offset="0" stop-color="#6cc0f4"/><stop offset="1" stop-color="#7c9ce8"/></linearGradient></defs><path d="M0 0L7 3.5 0 7 1.3 3.5z" fill="url(#g2)" opacity=".85"/></svg>
<div style="position:absolute;left:14.8px;top:151.26px;width:571.2px;height:1px;background:#eeeff1"></div>
<div style="position:absolute;left:18.8px;top:155.56px;width:18.8px;height:18.8px;border-radius:50%;background:linear-gradient(160deg,#ea4b4b,#d81b60)"></div>
<svg style="left:22.6px;top:158.76px" width="11.2" height="12" viewBox="0 0 11.2 12"><g fill="none" stroke="#fff" stroke-width=".95"><rect x="1" y="2.2" width="9.2" height="8.8" rx="1.6"/><path d="M3.4 1.2h4.4"/></g><g fill="#fff"><rect x="2.7" y="4" width="2.2" height="1.9" rx=".3"/><rect x="6.3" y="4" width="2.2" height="1.9" rx=".3"/><path d="M2.6 7.6h6v1.6h-6z" opacity=".9"/></g><path d="M3.6 7.6v1.6M5.6 7.6v1.6M7.6 7.6v1.6" stroke="#e03658" stroke-width=".45"/></svg>
<div class="a td tn" style="left:56.1px;top:162.06px">Санжаажамц Бадамжунай</div>
<div class="a td" style="left:283.7px;top:162.06px;letter-spacing:-0.12px">facebook</div>
<div class="a td" style="left:369.3px;top:162.06px;letter-spacing:-0.16px">2024-03-31 09:26:59</div>
<div style="position:absolute;left:559.2px;top:156.46px;width:23.1px;height:17px;border:0.8px solid #f0f1f3;border-radius:3px;background:#fff"></div>
<svg style="left:567.2px;top:161.56px" width="7" height="7" viewBox="0 0 7 7"><defs><linearGradient id="g3" x1="0" y1="0" x2="0" y2="1"><stop offset="0" stop-color="#6cc0f4"/><stop offset="1" stop-color="#7c9ce8"/></linearGradient></defs><path d="M0 0L7 3.5 0 7 1.3 3.5z" fill="url(#g3)" opacity=".85"/></svg>
<div style="position:absolute;left:14.8px;top:177.88px;width:571.2px;height:1px;background:#eeeff1"></div>
<div style="position:absolute;left:18.8px;top:182.18px;width:18.8px;height:18.8px;border-radius:50%;background:linear-gradient(160deg,#ea4b4b,#d81b60)"></div>
<svg style="left:22.6px;top:185.38px" width="11.2" height="12" viewBox="0 0 11.2 12"><g fill="none" stroke="#fff" stroke-width=".95"><rect x="1" y="2.2" width="9.2" height="8.8" rx="1.6"/><path d="M3.4 1.2h4.4"/></g><g fill="#fff"><rect x="2.7" y="4" width="2.2" height="1.9" rx=".3"/><rect x="6.3" y="4" width="2.2" height="1.9" rx=".3"/><path d="M2.6 7.6h6v1.6h-6z" opacity=".9"/></g><path d="M3.6 7.6v1.6M5.6 7.6v1.6M7.6 7.6v1.6" stroke="#e03658" stroke-width=".45"/></svg>
<div class="a td tn" style="left:56.1px;top:188.68px">Haliun Haliun</div>
<div class="a td" style="left:283.7px;top:188.68px;letter-spacing:-0.12px">facebook</div>
<div class="a td" style="left:369.3px;top:188.68px;letter-spacing:-0.16px">2024-03-28 05:11:51</div>
<div style="position:absolute;left:559.2px;top:183.08px;width:23.1px;height:17px;border:0.8px solid #f0f1f3;border-radius:3px;background:#fff"></div>
<svg style="left:567.2px;top:188.18px" width="7" height="7" viewBox="0 0 7 7"><defs><linearGradient id="g4" x1="0" y1="0" x2="0" y2="1"><stop offset="0" stop-color="#6cc0f4"/><stop offset="1" stop-color="#7c9ce8"/></linearGradient></defs><path d="M0 0L7 3.5 0 7 1.3 3.5z" fill="url(#g4)" opacity=".85"/></svg>
<div style="position:absolute;left:14.8px;top:204.5px;width:571.2px;height:1px;background:#eeeff1"></div>
<div style="position:absolute;left:18.8px;top:208.8px;width:18.8px;height:18.8px;border-radius:50%;background:linear-gradient(160deg,#ea4b4b,#d81b60)"></div>
<svg style="left:22.6px;top:212px" width="11.2" height="12" viewBox="0 0 11.2 12"><g fill="none" stroke="#fff" stroke-width=".95"><rect x="1" y="2.2" width="9.2" height="8.8" rx="1.6"/><path d="M3.4 1.2h4.4"/></g><g fill="#fff"><rect x="2.7" y="4" width="2.2" height="1.9" rx=".3"/><rect x="6.3" y="4" width="2.2" height="1.9" rx=".3"/><path d="M2.6 7.6h6v1.6h-6z" opacity=".9"/></g><path d="M3.6 7.6v1.6M5.6 7.6v1.6M7.6 7.6v1.6" stroke="#e03658" stroke-width=".45"/></svg>
<div class="a td tn" style="left:56.1px;top:215.3px">Temuulen Temuulen</div>
<div class="a td" style="left:283.7px;top:215.3px;letter-spacing:-0.12px">facebook</div>
<div class="a td" style="left:369.3px;top:215.3px;letter-spacing:-0.16px">2024-01-21 13:35:25</div>
<div style="position:absolute;left:559.2px;top:209.7px;width:23.1px;height:17px;border:0.8px solid #f0f1f3;border-radius:3px;background:#fff"></div>
<svg style="left:567.2px;top:214.8px" width="7" height="7" viewBox="0 0 7 7"><defs><linearGradient id="g5" x1="0" y1="0" x2="0" y2="1"><stop offset="0" stop-color="#6cc0f4"/><stop offset="1" stop-color="#7c9ce8"/></linearGradient></defs><path d="M0 0L7 3.5 0 7 1.3 3.5z" fill="url(#g5)" opacity=".85"/></svg>
<div style="position:absolute;left:14.8px;top:231.12px;width:571.2px;height:1px;background:#eeeff1"></div>
<div style="position:absolute;left:18.8px;top:235.42px;width:18.8px;height:18.8px;border-radius:50%;background:linear-gradient(160deg,#ea4b4b,#d81b60)"></div>
<svg style="left:22.6px;top:238.62px" width="11.2" height="12" viewBox="0 0 11.2 12"><g fill="none" stroke="#fff" stroke-width=".95"><rect x="1" y="2.2" width="9.2" height="8.8" rx="1.6"/><path d="M3.4 1.2h4.4"/></g><g fill="#fff"><rect x="2.7" y="4" width="2.2" height="1.9" rx=".3"/><rect x="6.3" y="4" width="2.2" height="1.9" rx=".3"/><path d="M2.6 7.6h6v1.6h-6z" opacity=".9"/></g><path d="M3.6 7.6v1.6M5.6 7.6v1.6M7.6 7.6v1.6" stroke="#e03658" stroke-width=".45"/></svg>
<div class="a td tn" style="left:56.1px;top:241.92px">Мухамед Алхажир Александро</div>
<div class="a td" style="left:283.7px;top:241.92px;letter-spacing:-0.12px">facebook</div>
<div class="a td" style="left:369.3px;top:241.92px;letter-spacing:-0.16px">2024-01-14 13:54:52</div>
<div style="position:absolute;left:559.2px;top:236.32px;width:23.1px;height:17px;border:0.8px solid #f0f1f3;border-radius:3px;background:#fff"></div>
<svg style="left:567.2px;top:241.42px" width="7" height="7" viewBox="0 0 7 7"><defs><linearGradient id="g6" x1="0" y1="0" x2="0" y2="1"><stop offset="0" stop-color="#6cc0f4"/><stop offset="1" stop-color="#7c9ce8"/></linearGradient></defs><path d="M0 0L7 3.5 0 7 1.3 3.5z" fill="url(#g6)" opacity=".85"/></svg>
<div style="position:absolute;left:14.8px;top:257.74px;width:571.2px;height:1px;background:#eeeff1"></div>
<div style="position:absolute;left:18.8px;top:262.04px;width:18.8px;height:18.8px;border-radius:50%;background:linear-gradient(160deg,#ea4b4b,#d81b60)"></div>
<svg style="left:22.6px;top:265.24px" width="11.2" height="12" viewBox="0 0 11.2 12"><g fill="none" stroke="#fff" stroke-width=".95"><rect x="1" y="2.2" width="9.2" height="8.8" rx="1.6"/><path d="M3.4 1.2h4.4"/></g><g fill="#fff"><rect x="2.7" y="4" width="2.2" height="1.9" rx=".3"/><rect x="6.3" y="4" width="2.2" height="1.9" rx=".3"/><path d="M2.6 7.6h6v1.6h-6z" opacity=".9"/></g><path d="M3.6 7.6v1.6M5.6 7.6v1.6M7.6 7.6v1.6" stroke="#e03658" stroke-width=".45"/></svg>
<div class="a td tn" style="left:56.1px;top:268.54px">Тод-Од Хурэлбаатар</div>
<div class="a td" style="left:283.7px;top:268.54px;letter-spacing:-0.12px">facebook</div>
<div class="a td" style="left:369.3px;top:268.54px;letter-spacing:-0.16px">2024-01-14 13:47:51</div>
<div style="position:absolute;left:559.2px;top:262.94px;width:23.1px;height:17px;border:0.8px solid #f0f1f3;border-radius:3px;background:#fff"></div>
<svg style="left:567.2px;top:268.04px" width="7" height="7" viewBox="0 0 7 7"><defs><linearGradient id="g7" x1="0" y1="0" x2="0" y2="1"><stop offset="0" stop-color="#6cc0f4"/><stop offset="1" stop-color="#7c9ce8"/></linearGradient></defs><path d="M0 0L7 3.5 0 7 1.3 3.5z" fill="url(#g7)" opacity=".85"/></svg>
<div style="position:absolute;left:14.8px;top:284.36px;width:571.2px;height:1px;background:#eeeff1"></div>
<div style="position:absolute;left:18.8px;top:288.66px;width:18.8px;height:18.8px;border-radius:50%;background:linear-gradient(160deg,#ea4b4b,#d81b60)"></div>
<svg style="left:22.6px;top:291.86px" width="11.2" height="12" viewBox="0 0 11.2 12"><g fill="none" stroke="#fff" stroke-width=".95"><rect x="1" y="2.2" width="9.2" height="8.8" rx="1.6"/><path d="M3.4 1.2h4.4"/></g><g fill="#fff"><rect x="2.7" y="4" width="2.2" height="1.9" rx=".3"/><rect x="6.3" y="4" width="2.2" height="1.9" rx=".3"/><path d="M2.6 7.6h6v1.6h-6z" opacity=".9"/></g><path d="M3.6 7.6v1.6M5.6 7.6v1.6M7.6 7.6v1.6" stroke="#e03658" stroke-width=".45"/></svg>
<div class="a td tn" style="left:56.1px;top:295.16px">Oldokh Batjargal</div>
<div class="a td" style="left:283.7px;top:295.16px;letter-spacing:-0.12px">facebook</div>
<div class="a td" style="left:369.3px;top:295.16px;letter-spacing:-0.16px">2023-12-22 10:22:05</div>
<div style="position:absolute;left:559.2px;top:289.56px;width:23.1px;height:17px;border:0.8px solid #f0f1f3;border-radius:3px;background:#fff"></div>
<svg style="left:567.2px;top:294.66px" width="7" height="7" viewBox="0 0 7 7"><defs><linearGradient id="g8" x1="0" y1="0" x2="0" y2="1"><stop offset="0" stop-color="#6cc0f4"/><stop offset="1" stop-color="#7c9ce8"/></linearGradient></defs><path d="M0 0L7 3.5 0 7 1.3 3.5z" fill="url(#g8)" opacity=".85"/></svg>
<div style="position:absolute;left:14.8px;top:310.98px;width:571.2px;height:1px;background:#eeeff1"></div>
<div style="position:absolute;left:18.8px;top:315.28px;width:18.8px;height:18.8px;border-radius:50%;background:linear-gradient(160deg,#ea4b4b,#d81b60)"></div>
<svg style="left:22.6px;top:318.48px" width="11.2" height="12" viewBox="0 0 11.2 12"><g fill="none" stroke="#fff" stroke-width=".95"><rect x="1" y="2.2" width="9.2" height="8.8" rx="1.6"/><path d="M3.4 1.2h4.4"/></g><g fill="#fff"><rect x="2.7" y="4" width="2.2" height="1.9" rx=".3"/><rect x="6.3" y="4" width="2.2" height="1.9" rx=".3"/><path d="M2.6 7.6h6v1.6h-6z" opacity=".9"/></g><path d="M3.6 7.6v1.6M5.6 7.6v1.6M7.6 7.6v1.6" stroke="#e03658" stroke-width=".45"/></svg>
<div class="a td tn" style="left:56.1px;top:321.78px">Ensuya Ensuy</div>
<div class="a td" style="left:283.7px;top:321.78px;letter-spacing:-0.12px">facebook</div>
<div class="a td" style="left:369.3px;top:321.78px;letter-spacing:-0.16px">2023-09-20 12:39:50</div>
<div style="position:absolute;left:559.2px;top:316.18px;width:23.1px;height:17px;border:0.8px solid #f0f1f3;border-radius:3px;background:#fff"></div>
<svg style="left:567.2px;top:321.28px" width="7" height="7" viewBox="0 0 7 7"><defs><linearGradient id="g9" x1="0" y1="0" x2="0" y2="1"><stop offset="0" stop-color="#6cc0f4"/><stop offset="1" stop-color="#7c9ce8"/></linearGradient></defs><path d="M0 0L7 3.5 0 7 1.3 3.5z" fill="url(#g9)" opacity=".85"/></svg>
</div>
<svg style="left:302.4px;top:82.2px" width="6" height="8" viewBox="0 0 6 8"><path d="M.6.6v6.2l1.5-1.4 1 2.1 1-.5-1-2h2.1z" fill="#000" stroke="#fff" stroke-width=".5" stroke-linejoin="round"/></svg>
<svg style="left:0;top:576px" width="6" height="6" viewBox="0 0 6 6"><path d="M0 0A6 6 0 0 0 6 6H0z" fill="#000"/></svg>
<svg style="left:954px;top:576px" width="6" height="6" viewBox="0 0 6 6"><path d="M6 0A6 6 0 0 1 0 6H6z" fill="#000"/></svg>
</body></html>
